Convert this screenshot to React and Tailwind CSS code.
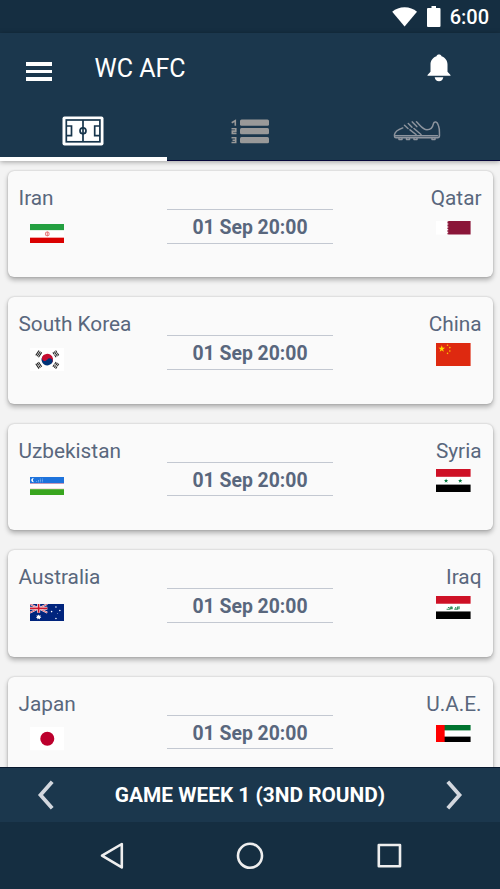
import React from "react";

const Iran = () => (
  <svg className="block" width="34.6" height="19.8" viewBox="0 0 35 20" preserveAspectRatio="none">
    <rect width="35" height="20" fill="#fff" />
    <rect width="35" height="6.2" fill="#239f40" />
    <rect y="13.8" width="35" height="6.2" fill="#da0000" />
    <circle cx="17.5" cy="10" r="1.9" fill="none" stroke="#e88080" strokeWidth="1.1" />
    <path d="M17.5 7.6v4.8" stroke="#e46a6a" strokeWidth=".9" />
  </svg>
);

const Qatar = () => (
  <svg className="block" width="34.6" height="13.6" viewBox="0 0 35 13.6" preserveAspectRatio="none">
    <rect width="35" height="13.6" fill="#fff" />
    <path
      d="M35 0H11l1.8.8L11 1.6l1.8.7-1.8.8 1.8.7-1.8.8 1.8.7-1.8.8 1.8.7-1.8.8 1.8.8-1.8.8 1.8.8-1.8.8 1.8.8-1.8.8 1.8.6-1.8.4h24z"
      fill="#8a1538"
    />
  </svg>
);

const SouthKorea = () => (
  <svg className="block" width="34.6" height="23.2" viewBox="0 0 36 24" preserveAspectRatio="none">
    <rect width="36" height="24" fill="#fff" />
    <g transform="rotate(33.7 18 12)">
      <path d="M12 12a6 6 0 0 1 12 0z" fill="#c60c30" />
      <path d="M12 12a6 6 0 0 0 12 0z" fill="#003478" />
      <circle cx="15" cy="12" r="3" fill="#c60c30" />
      <circle cx="21" cy="12" r="3" fill="#003478" />
    </g>
    <g stroke="#222" strokeWidth="1.1">
      <g transform="rotate(33.7 18 12)">
        <path d="M5.6 9v6M7.3 9v6M9 9v6" />
        <path d="M27 9v6M28.7 9v6M30.4 9v6" strokeDasharray="2.7 .6" />
      </g>
      <g transform="rotate(-33.7 18 12)">
        <path d="M5.6 9v6M9 9v6" />
        <path d="M7.3 9v6M27 9v6M30.4 9v6" strokeDasharray="2.7 .6" />
        <path d="M28.7 9v6" />
      </g>
    </g>
  </svg>
);

const China = () => (
  <svg className="block" width="34.6" height="23" viewBox="0 0 30 20" preserveAspectRatio="none">
    <rect width="30" height="20" fill="#de2910" />
    <path d="m5 2 .7 2.1h2.2L6.1 5.5l.7 2.1L5 6.3 3.2 7.6l.7-2.1-1.8-1.4h2.2z" fill="#ffde00" />
    <g fill="#ffc400">
      <circle cx="10" cy="2" r=".7" />
      <circle cx="12" cy="4" r=".7" />
      <circle cx="12" cy="7" r=".7" />
      <circle cx="10" cy="9" r=".7" />
    </g>
  </svg>
);

const Uzbekistan = () => (
  <svg className="block" width="34.6" height="18" viewBox="0 0 35 18" preserveAspectRatio="none">
    <rect width="35" height="18" fill="#fff" />
    <rect width="35" height="6.3" fill="#1e73dc" />
    <rect y="6" width="35" height=".5" fill="#ce5a7a" />
    <rect y="11.7" width="35" height=".5" fill="#e0a08a" />
    <rect y="12.2" width="35" height="5.8" fill="#38a51e" />
    <path d="M4 1.100a2.100 2.100 0 1 0 0 4 2.400 2.400 0 0 1 0-4z" fill="#fff" />
    <g fill="#8ebcf2">
      <circle cx="6.8" cy="4.6" r=".5" />
      <circle cx="8.6" cy="3.4" r=".5" />
      <circle cx="8.6" cy="4.8" r=".5" />
      <circle cx="10.5" cy="2" r=".5" />
      <circle cx="10.5" cy="3.4" r=".5" />
      <circle cx="10.5" cy="4.8" r=".5" />
      <circle cx="12.5" cy="2" r=".5" />
      <circle cx="12.5" cy="3.4" r=".5" />
      <circle cx="12.5" cy="4.8" r=".5" />
    </g>
  </svg>
);

const Syria = () => (
  <svg className="block" width="34.6" height="23.4" viewBox="0 0 36 24" preserveAspectRatio="none">
    <rect width="36" height="24" fill="#fff" />
    <rect width="36" height="8" fill="#ce1126" />
    <rect y="16" width="36" height="8" fill="#000" />
    <g fill="#007a3d">
      <path d="m10.500 9.800.6 1.600h1.700l-1.400 1 .6 1.700-1.500-1-1.500 1 .6-1.700-1.400-1h1.700z" />
      <path d="m25.200 9.800.6 1.600h1.700l-1.400 1 .6 1.700-1.500-1-1.500 1 .6-1.700-1.400-1h1.700z" />
    </g>
  </svg>
);

const Australia = () => (
  <svg className="block" width="34.6" height="17.3" viewBox="0 0 40 20" preserveAspectRatio="none">
    <rect width="40" height="20" fill="#00247d" />
    <path d="m0 0 20 10M20 0 0 10" stroke="#fff" strokeWidth="2" />
    <path d="m0 0 20 10M20 0 0 10" stroke="#cf142b" strokeWidth=".8" />
    <path d="M10 0v10M0 5h20" stroke="#fff" strokeWidth="3.4" />
    <path d="M10 0v10M0 5h20" stroke="#cf142b" strokeWidth="1.9" />
    <g fill="#fff">
      <path d="m10 12 .8 1.500 1.700-.5-.6 1.600 1.300 1.100-1.700.4v1.700L10 16.700l-1.500 1.100v-1.700l-1.700-.4 1.300-1.100-.6-1.600 1.700.5z" />
      <circle cx="30" cy="3.4" r=".9" />
      <circle cx="25" cy="8.8" r=".9" />
      <circle cx="34.5" cy="7.5" r=".9" />
      <circle cx="30" cy="16.7" r=".9" />
      <circle cx="32" cy="10.9" r=".5" />
    </g>
  </svg>
);

const Iraq = () => (
  <svg className="block" width="34.6" height="23.2" viewBox="0 0 36 24" preserveAspectRatio="none">
    <rect width="36" height="24" fill="#fff" />
    <rect width="36" height="8" fill="#ce1126" />
    <rect y="16" width="36" height="8" fill="#000" />
    <path
      d="M11 13.700h3.500v-2M13 11.500v1M15.700 10.600v3M16.800 13.600v-2.500M19 13.600h3.500v-2.800M20.500 11.400v1.200M24 10.500v3.200"
      fill="none"
      stroke="#2f8f5a"
      strokeWidth="1.2"
    />
  </svg>
);

const Japan = () => (
  <svg className="block" width="34.6" height="23.2" viewBox="0 0 34.6 23.2" preserveAspectRatio="none">
    <rect width="34.6" height="23.2" fill="#fff" />
    <circle cx="17.3" cy="11.7" r="7" fill="#bc002d" />
  </svg>
);

const Uae = () => (
  <svg className="block" width="34.6" height="17" viewBox="0 0 34 17" preserveAspectRatio="none">
    <rect width="34" height="17" fill="#fff" />
    <rect width="34" height="5.4" fill="#00732f" />
    <rect y="11.6" width="34" height="5.4" fill="#000" />
    <rect width="8.5" height="17" fill="#f00" />
  </svg>
);

const games = [
  { home: "Iran", homeFlag: Iran, away: "Qatar", awayFlag: Qatar },
  { home: "South Korea", homeFlag: SouthKorea, away: "China", awayFlag: China },
  { home: "Uzbekistan", homeFlag: Uzbekistan, away: "Syria", awayFlag: Syria },
  { home: "Australia", homeFlag: Australia, away: "Iraq", awayFlag: Iraq },
  { home: "Japan", homeFlag: Japan, away: "U.A.E.", awayFlag: Uae },
];

const GameCard = ({ game }) => {
  const HomeFlag = game.homeFlag;
  const AwayFlag = game.awayFlag;

  return (
    <article className="grid h-[106.4px] shrink-0 grid-cols-[1fr_166.6px_1fr] rounded-[6px] bg-[#fafafa] text-[#59677d] shadow-[0_3px_5px_rgba(0,0,0,0.28),0_0_2px_rgba(0,0,0,0.22)]">
      <div className="flex flex-col items-start pt-[14px] pl-[11px]">
        <span className="text-[20.8px] leading-[26px] whitespace-nowrap">{game.home}</span>
        <div className="ml-[11px] flex h-[45px] items-center">
          <HomeFlag />
        </div>
      </div>
      <div className="pt-[38px]">
        <div className="flex h-[34.6px] items-center justify-center border-y border-[#c3c8d1] pt-[2.4px] text-[19.4px] font-bold whitespace-nowrap">
          01 Sep 20:00
        </div>
      </div>
      <div className="flex flex-col items-end pt-[14px] pr-[11px]">
        <span className="text-[20.8px] leading-[26px] whitespace-nowrap">{game.away}</span>
        <div className="mr-[11px] flex h-[34px] items-center">
          <AwayFlag />
        </div>
      </div>
    </article>
  );
};

const StatusBar = () => (
  <div className="flex h-[33px] shrink-0 items-center justify-end bg-[#152e41] pr-[11px] text-white">
    <svg className="mr-[9px]" width="26" height="20" viewBox="0 0 26 20" fill="currentColor">
      <path d="M13.600 19.500 1.200 4.800C4.600 1.800 8.900.2 13.600.2s9 1.600 12.400 4.600z" />
    </svg>
    <svg className="mr-[9px]" width="15" height="21" viewBox="0 0 15 21" fill="currentColor">
      <path d="M5.500 0h4.500v2h3.500q1 0 1 1v17q0 1-1 1h-11.500q-1 0-1-1V3q0-1 1-1h3.500z" />
    </svg>
    <span className="pt-px text-[20px] leading-none font-medium">6:00</span>
  </div>
);

const PitchIcon = () => (
  <svg width="42" height="30" viewBox="0 0 42 30" fill="none">
    <rect x=".5" y=".5" width="41" height="29" rx="2" fill="#fff" />
    <g stroke="#17354c" strokeWidth="1.7">
      <rect x="4.3" y="4" width="33.6" height="21.8" />
      <path d="M21 4v22M4.500 10h5v9.600h-5M37.700 10h-5v9.600h5" />
      <circle cx="21" cy="14.800" r="3" />
    </g>
  </svg>
);

const TableIcon = () => (
  <svg width="38" height="25" viewBox="0 0 38 25" fill="none">
    <g fill="#999">
      <rect x="9" y="0.5" width="29" height="6.2" rx="1.5" />
      <rect x="9" y="9" width="29" height="6.2" rx="1.5" />
      <rect x="9" y="18" width="29" height="6.2" rx="1.5" />
    </g>
    <g stroke="#999" strokeWidth="1.6">
      <path d="M.7 3.700 4.300 1.700v5" />
      <path d="M.5 9.800h4.300v2.300H1.300v2.300H5.500" />
      <path d="M.5 18.800h4.200v4.700H.5M1.500 21.200h3" />
    </g>
  </svg>
);

const BootIcon = () => (
  <svg width="48" height="20" viewBox="0 0 48 20" fill="none" stroke="#8d949e" strokeWidth="1.5" strokeLinejoin="round" strokeLinecap="round">
    <path d="M9.800 6.900C6 8.300 2 10.500 1.500 13.500v1.700q0 1.500 1.500 1.500h41.500c1.500 0 2-1 2-2.500-.2-4 .3-6-1-9.500-.6-2-1.200-3.400-2.500-3.700-1.500-.4-2.400.7-2.700 2.200C39.600 6.700 37 8.800 34 8.800c-4 0-6-3.500-10.500-8" />
    <path d="M2.500 14.800h42M11.500 4.300l3.500 3.200M15.300 2.500l3.700 3.700M19.300.9l4.500 4.700M17 8.800l6 4.700M21 7.500l7 6" />
    <path d="M6 17.500v1h3v-1M13.500 17.500v1h3v-1M21 17.500v1h3v-1M39 17.500v1h3v-1" />
  </svg>
);

const Header = () => (
  <header className="relative z-10 flex h-[128px] shrink-0 flex-col bg-[#1b374d] text-white shadow-[0_1px_5px_rgba(0,0,0,0.35)]">
    <div className="flex h-[76px] items-center pr-[49px] pl-[26px]">
      <div className="mt-px flex w-[26px] flex-col gap-[4px]">
        <span className="h-[3.5px] bg-white" />
        <span className="h-[3.5px] bg-white" />
        <span className="h-[3.5px] bg-white" />
      </div>
      <h1 className="mb-[4.400px] ml-[42.500px] grow text-[25px] leading-[30px]">WC AFC</h1>
      <svg className="mb-[7px]" width="24" height="28" viewBox="0 0 24 28" fill="currentColor">
        <path d="M12 .5c1.400 0 2.300.7 2.500 1.700 3.800 1.300 6 4.300 6 8.300v7.300l3 3.200v.7H.5V21l3-3.200v-7.300c0-4 2.200-7 6-8.300C9.700 1.200 10.600.5 12 .5z" />
        <path d="M7.700 23.200h8.600c-.4 2.500-2 4-4.300 4s-3.900-1.500-4.300-4z" />
      </svg>
    </div>
    <nav className="grid grow grid-cols-3">
      <div className="flex justify-center border-b-4 border-white pt-[7px]">
        <PitchIcon />
      </div>
      <div className="flex justify-center border-b border-[#06063a] pt-[10px]">
        <TableIcon />
      </div>
      <div className="flex justify-center border-b border-[#06063a] pt-[12px]">
        <BootIcon />
      </div>
    </nav>
  </header>
);

const WeekBar = () => (
  <div className="relative z-10 flex h-[55px] shrink-0 items-center justify-between border-t border-[#07182e] bg-[#1b374d] px-[37px] text-white">
    <svg width="18" height="30" viewBox="0 0 18 30" fill="none" stroke="#d3d7de" strokeWidth="3.8">
      <path d="M15.200 1.700 3.500 15l11.700 13.300" />
    </svg>
    <span className="pt-px text-[20.850px] leading-none font-bold whitespace-nowrap">GAME WEEK 1 (3ND ROUND)</span>
    <svg width="18" height="30" viewBox="0 0 18 30" fill="none" stroke="#d3d7de" strokeWidth="3.8">
      <path d="M2.800 1.700 14.500 15 2.800 28.300" />
    </svg>
  </div>
);

const SystemNav = () => (
  <div className="flex h-[67px] shrink-0 items-center justify-between bg-[#152e41] px-[97.500px]">
    <svg width="28" height="28" viewBox="0 0 28 28" fill="none" stroke="#eee" strokeWidth="2.6" strokeLinejoin="round">
      <path d="M23.800 2v23.400L4 13.700z" />
    </svg>
    <svg width="28" height="28" viewBox="0 0 28 28" fill="none" stroke="#eee" strokeWidth="2.6">
      <circle cx="14" cy="13.800" r="12" />
    </svg>
    <svg width="28" height="28" viewBox="0 0 28 28" fill="none" stroke="#eee" strokeWidth="2.6" strokeLinejoin="round">
      <rect x="3.8" y="3" width="21.2" height="21.2" />
    </svg>
  </div>
);

const App = () => (
  <div className="flex h-[889px] w-[500px] flex-col overflow-hidden bg-[#f3f3f3] font-['Roboto',sans-serif]">
    <StatusBar />
    <Header />
    <main className="flex h-[606px] shrink-0 flex-col gap-[20px] overflow-hidden px-[7.5px] pt-[10px]">
      {games.map((game) => (
        <GameCard key={game.home} game={game} />
      ))}
    </main>
    <WeekBar />
    <SystemNav />
  </div>
);

export default App;
